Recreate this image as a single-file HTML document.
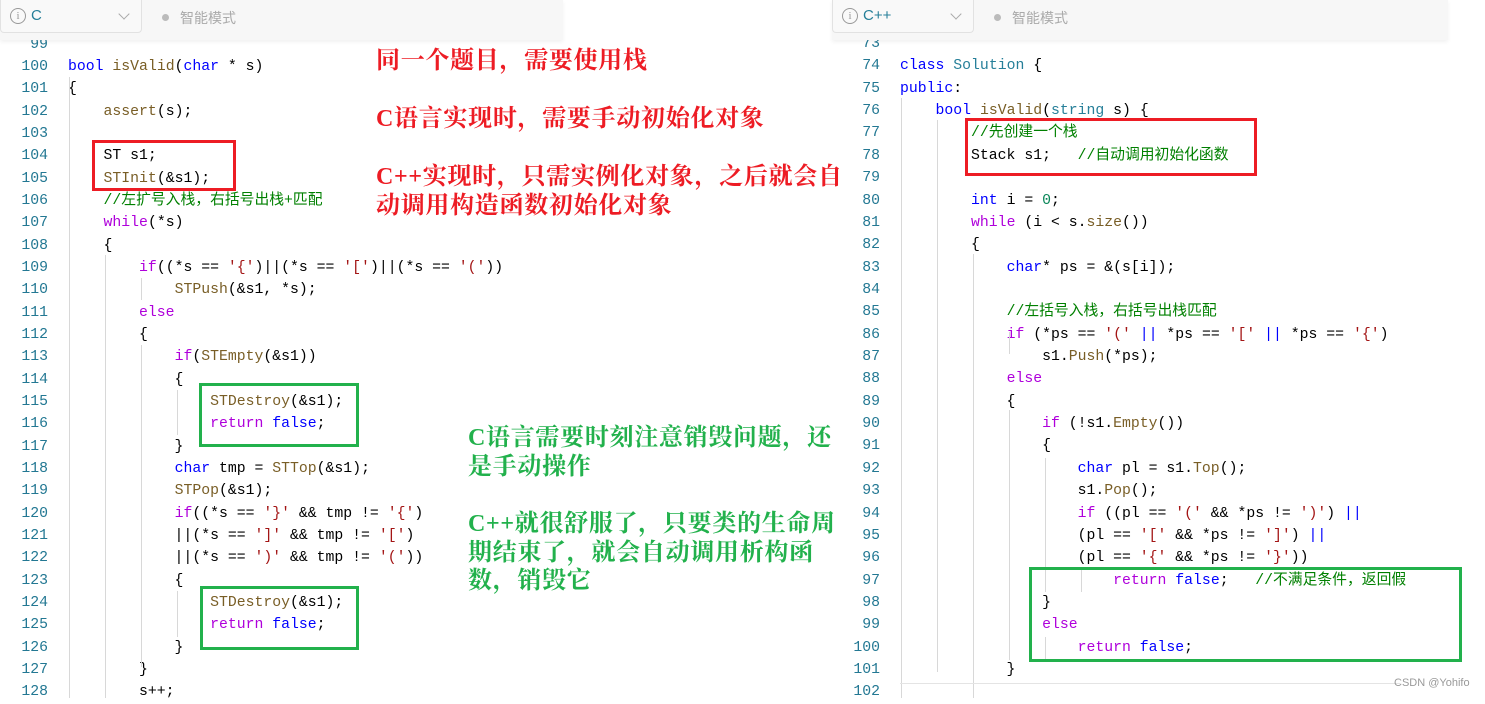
<!DOCTYPE html>
<html><head><meta charset="utf-8">
<style>
*{margin:0;padding:0;box-sizing:border-box}
body{width:1485px;height:698px;overflow:hidden;background:#fff;position:relative;font-family:"Liberation Mono","Noto Sans CJK SC",monospace}
.bar{position:absolute;top:0;height:40px;background:#f7f7f7;box-shadow:0 2px 4px rgba(0,0,0,0.06);z-index:5}
.sel{position:absolute;top:0;height:33px;border:1px solid #e2e2e2;border-top:none;border-radius:0 0 4px 4px;background:#f9f9f9;font-family:"Liberation Sans",sans-serif;font-size:15px;color:#333}
.sel .i{position:absolute;left:9px;top:8px;width:16px;height:16px;border:1.3px solid #999;border-radius:50%;font-size:11px;color:#999;text-align:center;line-height:14px;font-family:"Liberation Serif",serif}
.sel .t{position:absolute;left:30px;top:7px}
.sel .ch{position:absolute;top:10px;width:8px;height:8px;border-right:1.3px solid #aaa;border-bottom:1.3px solid #aaa;transform:rotate(45deg)}
.mode{position:absolute;top:8px;font-family:"Liberation Sans","Noto Sans CJK SC",sans-serif;font-size:14px;color:#aaa}
.mode:before{content:"";display:inline-block;width:7px;height:7px;border-radius:50%;background:#bbb;margin-right:11px;vertical-align:2px}
pre{position:absolute;font-family:"Liberation Mono","Noto Sans CJK SC",monospace;font-size:14.8px;white-space:pre;color:#000}
.ln{color:#237893;text-align:right}
.k{color:#0000ff}.c{color:#af00db}.f{color:#795e26}.s{color:#a31515}.m{color:#008000}.n{color:#098658}.t{color:#267f99}
.g{position:absolute;width:1px;background:#d8d8d8}
.box{position:absolute;border:3px solid}
.red{border-color:#ed1c24}.grn{border-color:#22b14c}
.ann{position:absolute;font-family:"Liberation Serif","Noto Serif CJK SC",serif;font-weight:bold;font-size:24px;letter-spacing:0.7px;line-height:28.5px;white-space:nowrap}
</style></head><body>

<pre class="ln" style="left:0;width:48px;top:33.7px;line-height:22.33px">99
100
101
102
103
104
105
106
107
108
109
110
111
112
113
114
115
116
117
118
119
120
121
122
123
124
125
126
127
128</pre>
<pre style="left:68px;top:33.7px;line-height:22.33px">

<span class="k">bool</span> <span class="f">isValid</span>(<span class="k">char</span> * s)
{
    <span class="f">assert</span>(s);

    ST s1;
    <span class="f">STInit</span>(&amp;s1);
    <span class="m">//左扩号入栈，右括号出栈+匹配</span>
    <span class="c">while</span>(*s)
    {
        <span class="c">if</span>((*s == <span class="s">'{'</span>)||(*s == <span class="s">'['</span>)||(*s == <span class="s">'('</span>))
            <span class="f">STPush</span>(&amp;s1, *s);
        <span class="c">else</span>
        {
            <span class="c">if</span>(<span class="f">STEmpty</span>(&amp;s1))
            {
                <span class="f">STDestroy</span>(&amp;s1);
                <span class="c">return</span> <span class="k">false</span>;
            }
            <span class="k">char</span> tmp = <span class="f">STTop</span>(&amp;s1);
            <span class="f">STPop</span>(&amp;s1);
            <span class="c">if</span>((*s == <span class="s">'}'</span> &amp;&amp; tmp != <span class="s">'{'</span>)
            ||(*s == <span class="s">']'</span> &amp;&amp; tmp != <span class="s">'['</span>)
            ||(*s == <span class="s">')'</span> &amp;&amp; tmp != <span class="s">'('</span>))
            {
                <span class="f">STDestroy</span>(&amp;s1);
                <span class="c">return</span> <span class="k">false</span>;
            }
        }
        s++;</pre>

<div class="g" style="left:69px;top:77px;height:621px"></div>
<div class="g" style="left:105px;top:255px;height:443px"></div>
<div class="g" style="left:141px;top:278px;height:22px"></div>
<div class="g" style="left:141px;top:345px;height:322px"></div>
<div class="g" style="left:177px;top:390px;height:45px"></div>
<div class="g" style="left:177px;top:591px;height:46px"></div>

<pre class="ln" style="left:832px;width:48px;top:33px;line-height:22.36px">73
74
75
76
77
78
79
80
81
82
83
84
85
86
87
88
89
90
91
92
93
94
95
96
97
98
99
100
101
102</pre>
<pre style="left:900px;top:33px;line-height:22.36px">

<span class="k">class</span> <span class="t">Solution</span> {
<span class="k">public</span>:
    <span class="k">bool</span> <span class="f">isValid</span>(<span class="t">string</span> s) {
        <span class="m">//先创建一个栈</span>
        Stack s1;   <span class="m">//自动调用初始化函数</span>

        <span class="k">int</span> i = <span class="n">0</span>;
        <span class="c">while</span> (i &lt; s.<span class="f">size</span>())
        {
            <span class="k">char</span>* ps = &amp;(s[i]);

            <span class="m">//左括号入栈，右括号出栈匹配</span>
            <span class="c">if</span> (*ps == <span class="s">'('</span> <span class="k">||</span> *ps == <span class="s">'['</span> <span class="k">||</span> *ps == <span class="s">'{'</span>)
                s1.<span class="f">Push</span>(*ps);
            <span class="c">else</span>
            {
                <span class="c">if</span> (!s1.<span class="f">Empty</span>())
                {
                    <span class="k">char</span> pl = s1.<span class="f">Top</span>();
                    s1.<span class="f">Pop</span>();
                    <span class="c">if</span> ((pl == <span class="s">'('</span> &amp;&amp; *ps != <span class="s">')'</span>) <span class="k">||</span>
                    (pl == <span class="s">'['</span> &amp;&amp; *ps != <span class="s">']'</span>) <span class="k">||</span>
                    (pl == <span class="s">'{'</span> &amp;&amp; *ps != <span class="s">'}'</span>))
                        <span class="c">return</span> <span class="k">false</span>;   <span class="m">//不满足条件，返回假</span>
                }
                <span class="c">else</span>
                    <span class="c">return</span> <span class="k">false</span>;
            }
</pre>

<div class="g" style="left:901px;top:98px;height:600px"></div>
<div class="g" style="left:937px;top:120px;height:552px"></div>
<div class="g" style="left:973px;top:254px;height:444px"></div>
<div class="g" style="left:1009px;top:332px;height:22px"></div>
<div class="g" style="left:1009px;top:410px;height:250px"></div>
<div class="g" style="left:1045px;top:458px;height:134px"></div>
<div class="g" style="left:1081px;top:570px;height:22px"></div>
<div class="g" style="left:1045px;top:637px;height:23px"></div>
<div style="position:absolute;left:900px;top:683px;width:500px;height:1px;background:#e4e4e4"></div>

<div class="bar" style="left:0;width:563px">
  <div class="sel" style="left:0;width:142px"><span class="i">i</span><span class="t">C</span><span class="ch" style="left:119px"></span></div>
  <div class="mode" style="left:162px">智能模式</div>
</div>
<div class="bar" style="left:832px;width:616px">
  <div class="sel" style="left:0;width:142px"><span class="i">i</span><span class="t">C++</span><span class="ch" style="left:119px"></span></div>
  <div class="mode" style="left:162px">智能模式</div>
</div>

<div class="box red" style="left:92px;top:140px;width:144px;height:51px"></div>
<div class="box grn" style="left:199px;top:383px;width:160px;height:64px"></div>
<div class="box grn" style="left:200px;top:586px;width:159px;height:64px"></div>
<div class="box red" style="left:965px;top:118px;width:292px;height:58px"></div>
<div class="box grn" style="left:1029px;top:567px;width:433px;height:95px"></div>

<div class="ann" style="left:376px;top:47px;color:#ed1c24">同一个题目，需要使用栈</div>
<div class="ann" style="left:376px;top:105px;color:#ed1c24">C语言实现时，需要手动初始化对象</div>
<div class="ann" style="left:376px;top:163px;color:#ed1c24">C++实现时，只需实例化对象，之后就会自<br>动调用构造函数初始化对象</div>
<div class="ann" style="left:468px;top:424px;color:#22b14c">C语言需要时刻注意销毁问题，还<br>是手动操作</div>
<div class="ann" style="left:468px;top:510px;color:#22b14c">C++就很舒服了，只要类的生命周<br>期结束了，就会自动调用析构函<br>数，销毁它</div>

<div style="position:absolute;left:1394px;top:677px;font-family:'Liberation Sans',sans-serif;font-size:11px;color:#999">CSDN @Yohifo</div>
</body></html>
